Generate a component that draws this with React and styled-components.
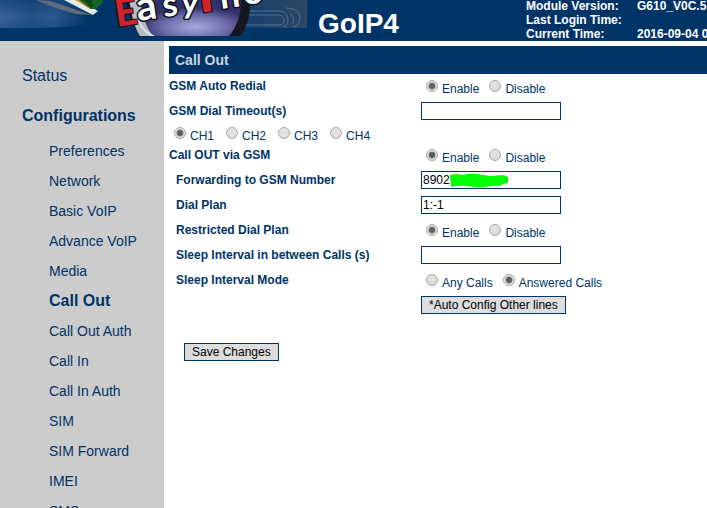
import React, { useState } from 'react';
import styled, { createGlobalStyle } from 'styled-components';

const navy = '#003366';

const GlobalStyle = createGlobalStyle`
  body {
    margin: 0;
    background: #fff;
    color: ${navy};
    font-family: "Liberation Sans", Arial, sans-serif;
    font-size: 12px;
  }
  * {
    box-sizing: border-box;
  }
`;

const Page = styled.div`
  display: flex;
  flex-direction: column;
  height: 100vh;
  overflow: hidden;
`;

const Header = styled.header`
  display: flex;
  flex: none;
  height: 41px;
  background: ${navy};
  color: #fff;
  overflow: hidden;
`;

const Banner = styled.svg`
  flex: none;
  width: 308px;
  height: 41px;
`;

const Model = styled.h1`
  flex: none;
  width: 208px;
  margin: 0;
  padding: 8px 0 0 10px;
  font-size: 28px;
  line-height: 32px;
`;

const Info = styled.dl`
  display: grid;
  grid-template-columns: 111px max-content;
  align-content: end;
  flex: 1;
  min-width: 0;
  margin: 0;
  padding-left: 10px;
  overflow: hidden;
  font-weight: bold;
  line-height: 14px;
  white-space: nowrap;

  dd {
    margin: 0;
  }
`;

const Body = styled.div`
  display: flex;
  flex: 1;
  min-height: 0;
`;

const Sidebar = styled.nav`
  flex: none;
  width: 164px;
  padding-top: 15px;
  background: #ccc;
  overflow: hidden;
`;

const MenuLink = styled.a`
  display: block;
  padding-left: ${(p) => (p.$sub ? '49px' : '22px')};
  font-size: ${(p) => (p.$sub && !p.$active ? '14px' : '16px')};
  font-weight: ${(p) => (p.$active ? 'bold' : 'normal')};
  line-height: ${(p) => (p.$sub ? '30px' : '40px')};
  color: ${navy};
  text-decoration: none;
`;

const Main = styled.main`
  flex: 1;
  min-width: 0;
  padding: 5px 0 0 5px;
`;

const Title = styled.h2`
  margin: 0;
  padding-left: 6px;
  background: ${navy};
  color: #ccd5e0;
  font-size: 14px;
  line-height: 28px;
`;

const Row = styled.div`
  display: grid;
  grid-template-columns: 252px 1fr;
  align-items: center;
  height: 25px;
  padding-bottom: 2px;
`;

const Label = styled.label`
  padding-left: ${(p) => (p.$indent ? '7px' : '0')};
  font-weight: bold;
`;

const Choices = styled.div`
  display: flex;
  gap: ${(p) => (p.$wide ? '12px' : '10px')};
  padding: ${(p) => (p.$wide ? '3px' : '5px')} 0 0 5px;
`;

const Lines = styled.div`
  height: 19px;
`;

const Choice = styled.label`
  display: flex;
  gap: 4px;
  line-height: 14px;

  span {
    padding-top: 2px;
  }
`;

const Radio = styled.input`
  appearance: none;
  width: 12px;
  height: 12px;
  margin: 0;
  border: 1px solid #a6a6a6;
  border-radius: 50%;
  background: linear-gradient(#e4e4e4, #dcdcdc);

  &:checked {
    background: radial-gradient(circle, #5c5c5c 0 2px, #777 3px, #e4e4e4 4px);
  }
`;

const Field = styled.div`
  position: relative;
  display: flex;
  width: 140px;
`;

const TextBox = styled.input`
  width: 100%;
  height: 18px;
  padding: 0 1px;
  border: 1px solid ${navy};
  border-radius: 0;
  background: #fff;
  color: #000;
  font: inherit;
`;

const Scribble = styled.svg`
  position: absolute;
  left: 29px;
  top: 2px;
  width: 59px;
  height: 15px;
`;

const Button = styled.button`
  justify-self: start;
  height: 18px;
  padding: 0 7px;
  border: 1px solid ${navy};
  border-radius: 0;
  background: #ddd;
  color: #000;
  font: inherit;
  line-height: 16px;
`;

const Actions = styled.div`
  padding: 25px 15px;
`;

const menu = [
  'Preferences',
  'Network',
  'Basic VoIP',
  'Advance VoIP',
  'Media',
  'Call Out',
  'Call Out Auth',
  'Call In',
  'Call In Auth',
  'SIM',
  'SIM Forward',
  'IMEI',
  'SMS',
];

function Logo() {
  return (
    <Banner viewBox="0 0 308 41" role="img" aria-label="EasyPhone">
      <defs>
        <linearGradient id="sky" x1="0" y1="0" x2="1" y2="0">
          <stop offset="0" stopColor="#3c6598" />
          <stop offset="0.35" stopColor="#24538a" />
          <stop offset="0.6" stopColor="#2d5a91" />
          <stop offset="1" stopColor="#003366" />
        </linearGradient>
        <linearGradient id="fade" x1="0" y1="0" x2="0" y2="1">
          <stop offset="0" stopColor="#003366" stopOpacity="0.5" />
          <stop offset="0.6" stopColor="#003366" stopOpacity="0" />
          <stop offset="1" stopColor="#003366" stopOpacity="0.3" />
        </linearGradient>
        <linearGradient id="panel" x1="0" y1="0" x2="1" y2="0">
          <stop offset="0" stopColor="#123f70" />
          <stop offset="1" stopColor="#2f4763" />
        </linearGradient>
        <radialGradient id="ball" cx="0.55" cy="0.75" r="0.55">
          <stop offset="0" stopColor="#a9a9dc" />
          <stop offset="0.6" stopColor="#6c6aa8" />
          <stop offset="1" stopColor="#30306a" />
        </radialGradient>
        <clipPath id="picture">
          <rect width="308" height="36" />
        </clipPath>
      </defs>
      <g clipPath="url(#picture)">
        <path d="M0 0H90V24Q60 29 0 28Z" fill="url(#sky)" />
        <path d="M0 0H90V24Q60 29 0 28Z" fill="url(#fade)" />
        <path d="M36 0L50 1L92 15L76 14Q56 9 36 0Z" fill="#5f6c78" />
        <path d="M64 0H78L98 11L93 15Z" fill="#e8edf1" />
        <path d="M75 0H81L93 8L90 9Z" fill="#c99638" />
        <path d="M79 0H102L103 2L96 9H91Z" fill="#176322" />
        <path d="M84 0H91L94 6L91 8Z" fill="#0b4516" />
        <rect x="240" width="67" height="28" fill="url(#panel)" />
        <g fill="none" stroke="#557391" strokeWidth="1">
          <path d="M247 15H279Q284 16 284 21Q284 25 279 25H244" />
          <path d="M248 11H281Q288 13 288 20Q288 26 283 27" />
          <path d="M286 8Q300 8 300 18Q300 26 293 27" />
          <path d="M290 14Q295 16 293 24" />
        </g>
        <path d="M125 0H250V10Q248 26 240 36H140Q130 22 125 0Z" fill="#15161f" />
        <path d="M129 0H148L160 36H140Q136 30 133 20Z" fill="#b8bcc0" />
        <path d="M140 0H241Q241 22 229 36H153Q144 26 140 0Z" fill="url(#ball)" />
        <path d="M137 14Q141 30 155 36H150Q138 28 137 14Z" fill="#e3e3e3" />
      </g>
      <g
        fontFamily="Lato, Liberation Sans, sans-serif"
        fontWeight="bold"
        paintOrder="stroke"
        strokeLinejoin="round"
        stroke="#101020"
        strokeWidth="3"
      >
        <text fontSize="38" fontWeight="900" fill="#d2232a" transform="translate(117 27) rotate(-9)" strokeWidth="2">E</text>
        <text fontSize="40" fill="#fff" transform="translate(138 21) rotate(-8)">a</text>
        <text fontSize="34" fill="#fff" transform="translate(164 17) rotate(-8)">s</text>
        <text fontSize="32" fill="#fff" transform="translate(181 13) rotate(2)">y</text>
        <text fontSize="52" fontWeight="900" fill="#d2232a" transform="translate(200 13) rotate(-8)" strokeWidth="2">P</text>
        <text fontSize="36" fill="#fff" transform="translate(221 9) rotate(-8)">h</text>
        <text fontSize="36" fill="#fff" transform="translate(244 5) rotate(-8)">o</text>
      </g>
    </Banner>
  );
}

function RadioGroup({ name, options, initial, wide }) {
  const [value, setValue] = useState(initial);

  return (
    <Choices role="radiogroup" aria-label={name} $wide={wide}>
      {options.map((option) => (
        <Choice key={option}>
          <Radio
            type="radio"
            name={name}
            checked={value === option}
            onChange={() => setValue(option)}
          />
          <span>{option}</span>
        </Choice>
      ))}
    </Choices>
  );
}

const toggle = ['Enable', 'Disable'];

function App() {
  return (
    <Page>
      <GlobalStyle />
      <Header>
        <Logo />
        <Model>GoIP4</Model>
        <Info>
          <dt>Module Version:</dt>
          <dd>G610_V0C.5</dd>
          <dt>Last Login Time:</dt>
          <dd />
          <dt>Current Time:</dt>
          <dd>2016-09-04 0</dd>
        </Info>
      </Header>
      <Body>
        <Sidebar>
          <MenuLink href="#status">Status</MenuLink>
          <MenuLink href="#configurations" $active>Configurations</MenuLink>
          {menu.map((item) => (
            <MenuLink key={item} href="#" $sub $active={item === 'Call Out'}>
              {item}
            </MenuLink>
          ))}
        </Sidebar>
        <Main>
          <Title>Call Out</Title>
          <form onSubmit={(e) => e.preventDefault()}>
            <Row>
              <Label as="span">GSM Auto Redial</Label>
              <RadioGroup name="redial" options={toggle} initial="Enable" />
            </Row>
            <Row>
              <Label htmlFor="timeout">GSM Dial Timeout(s)</Label>
              <Field>
                <TextBox id="timeout" type="text" />
              </Field>
            </Row>
            <Lines>
              <RadioGroup name="line" options={['CH1', 'CH2', 'CH3', 'CH4']} initial="CH1" wide />
            </Lines>
            <Row>
              <Label as="span">Call OUT via GSM</Label>
              <RadioGroup name="via-gsm" options={toggle} initial="Enable" />
            </Row>
            <Row>
              <Label htmlFor="forward" $indent>Forwarding to GSM Number</Label>
              <Field>
                <TextBox id="forward" type="text" defaultValue="8902" />
                <Scribble viewBox="0 0 59 15" aria-hidden="true">
                  <path
                    d="M0 2L6 1L13 2Q20 0 27 1Q34 2 40 3L53 2L58 4V10L53 11L50 13Q43 12 36 14Q27 15 18 13Q9 12 1 14Z"
                    fill="#00ff00"
                  />
                </Scribble>
              </Field>
            </Row>
            <Row>
              <Label htmlFor="plan" $indent>Dial Plan</Label>
              <Field>
                <TextBox id="plan" type="text" defaultValue="1:-1" />
              </Field>
            </Row>
            <Row>
              <Label as="span" $indent>Restricted Dial Plan</Label>
              <RadioGroup name="restricted" options={toggle} initial="Enable" />
            </Row>
            <Row>
              <Label htmlFor="sleep" $indent>Sleep Interval in between Calls (s)</Label>
              <Field>
                <TextBox id="sleep" type="text" />
              </Field>
            </Row>
            <Row>
              <Label as="span" $indent>Sleep Interval Mode</Label>
              <RadioGroup
                name="sleep-mode"
                options={['Any Calls', 'Answered Calls']}
                initial="Answered Calls"
              />
            </Row>
            <Row>
              <span />
              <Button type="button">*Auto Config Other lines</Button>
            </Row>
            <Actions>
              <Button type="submit">Save Changes</Button>
            </Actions>
          </form>
        </Main>
      </Body>
    </Page>
  );
}

export default App;
